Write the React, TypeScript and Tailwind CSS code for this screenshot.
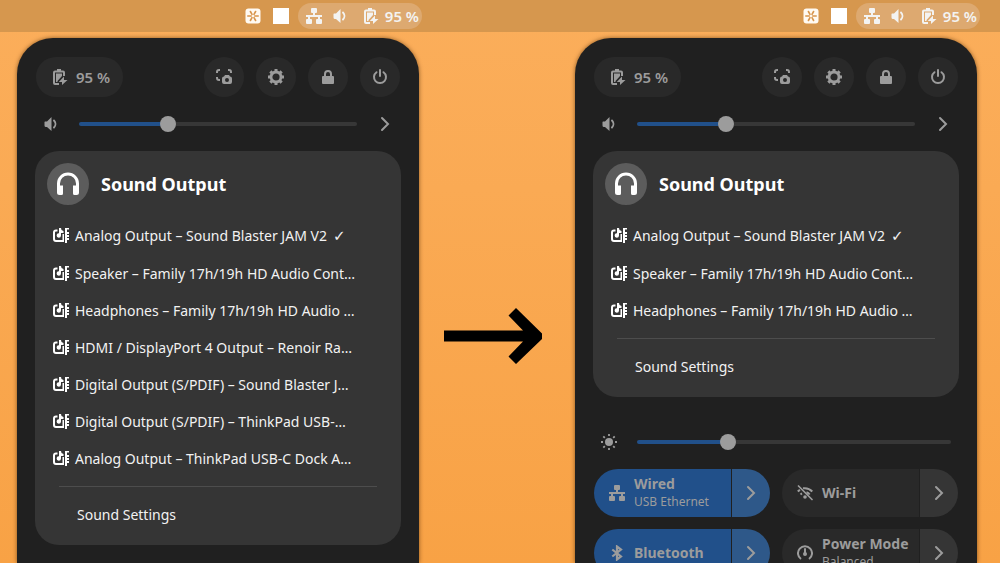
import React, { useState } from "react";

type IconProps = { className?: string };

function BatteryIcon({ className }: IconProps) {
  return (
    <svg viewBox="0 0 16 16" className={className} fill="currentColor" aria-hidden="true">
      <path d="M5 0h4v2H5z" />
      <path d="M3 1.500h8a2 2 0 0 1 2 2V7h-2V3.500H3V14h4v2H3a2 2 0 0 1-2-2V3.500a2 2 0 0 1 2-2z" />
      <path d="M4 4.500h6V7l-4.500 5V13H4z" />
      <path d="M12 7.500V11h3.500L10 16v-3H6.800z" />
    </svg>
  );
}

function SpeakerIcon({ className }: IconProps) {
  return (
    <svg viewBox="0 0 16 16" className={className} aria-hidden="true">
      <path fill="currentColor" d="M2 5.500h2L8.500 1v14L4 11H3a1.500 1.500 0 0 1-1.500-1.500V6z" />
      <path fill="none" stroke="currentColor" strokeWidth="1.900" strokeLinecap="round" d="M11 4.500a5 5 0 0 1 0 7" />
    </svg>
  );
}

function NetworkIcon({ className }: IconProps) {
  return (
    <svg viewBox="0 0 16 16" className={className} fill="currentColor" aria-hidden="true">
      <rect x="5" y="0" width="6" height="5" rx="1" />
      <path d="M7 4h2v3h7v2h-2v3h-2V9H4v3H2V9H0V7h7z" />
      <rect x="0" y="11" width="6" height="5" rx="1" />
      <rect x="10" y="11" width="6" height="5" rx="1" />
    </svg>
  );
}

function AsteriskIcon({ className }: IconProps) {
  return (
    <svg viewBox="0 0 16 16" className={className} aria-hidden="true">
      <rect x="0.500" y="0.500" width="15" height="15" rx="3" fill="#fffaf2" />
      <g stroke="#d8954c" strokeWidth="1.600" strokeLinecap="round">
        <path d="M2.800 8h3.400M9.800 8h3.400M5.400 3.500l1.600 2.900M10.600 3.500L9 6.400M5.400 12.500l1.600-2.900M10.600 12.500L9 9.600" />
      </g>
    </svg>
  );
}

function ScreenshotIcon({ className }: IconProps) {
  return (
    <svg viewBox="0 0 16 16" className={className} aria-hidden="true">
      <path fill="none" stroke="currentColor" strokeWidth="2" d="M1 4V3a2 2 0 0 1 2-2h1M12 1h1a2 2 0 0 1 2 2v1M1 8v1a2 2 0 0 0 2 2h1" />
      <path fill="currentColor" fillRule="evenodd" d="M8 7.500L9 6h4l1 1.500a2 2 0 0 1 2 2V13a2 2 0 0 1-2 2H8a2 2 0 0 1-2-2V9.500a2 2 0 0 1 2-2zM11 9a2 2 0 1 0 0 4 2 2 0 0 0 0-4z" />
    </svg>
  );
}

function GearIcon({ className }: IconProps) {
  return (
    <svg viewBox="0 0 16 16" className={className} aria-hidden="true">
      <circle cx="8" cy="8" r="5" fill="none" stroke="currentColor" strokeWidth="2.800" />
      <g stroke="currentColor" strokeWidth="3">
        <path d="M8 0v3M8 13v3M0 8h3M13 8h3M2.340 2.340l2 2M11.660 11.660l2 2M2.340 13.660l2-2M11.660 4.340l2-2" />
      </g>
    </svg>
  );
}

function LockIcon({ className }: IconProps) {
  return (
    <svg viewBox="0 0 16 16" className={className} aria-hidden="true">
      <path fill="none" stroke="currentColor" strokeWidth="2" d="M5 8V5a3 3 0 0 1 6 0v3" />
      <path fill="currentColor" d="M3 7h10a1 1 0 0 1 1 1v6a1 1 0 0 1-1 1H3a1 1 0 0 1-1-1V8a1 1 0 0 1 1-1z" />
    </svg>
  );
}

function PowerIcon({ className }: IconProps) {
  return (
    <svg viewBox="0 0 16 16" className={className} fill="none" stroke="currentColor" strokeWidth="2" strokeLinecap="round" aria-hidden="true">
      <path d="M8 1v6M4.500 3.200A6 6 0 1 0 11.500 3.200" />
    </svg>
  );
}

function ChevronIcon({ className }: IconProps) {
  return (
    <svg viewBox="0 0 16 16" className={className} fill="none" stroke="currentColor" strokeWidth="2" strokeLinecap="round" aria-hidden="true">
      <path d="M5 2l6 6-6 6" />
    </svg>
  );
}

function HeadphonesIcon({ className }: IconProps) {
  return (
    <svg viewBox="0 0 24 24" className={className} aria-hidden="true">
      <path fill="none" stroke="currentColor" strokeWidth="3" d="M2.500 17v-5.500a9.500 9.500 0 0 1 19 0V17" />
      <path fill="currentColor" d="M1 13.500h6v8A1.500 1.500 0 0 1 5.500 23h-2A2.500 2.500 0 0 1 1 20.500zM17 13.500h6v7a2.500 2.500 0 0 1-2.500 2.500h-2a1.500 1.500 0 0 1-1.500-1.500z" />
    </svg>
  );
}

function AudioCardIcon({ className }: IconProps) {
  return (
    <svg viewBox="0 0 16 16" className={className} fill="currentColor" aria-hidden="true">
      <path d="M4.500 1.500v2H3a1 1 0 0 0-1 1V11a1 1 0 0 0 1 1h8v2H3a3 3 0 0 1-3-3V4.500a3 3 0 0 1 3-3z" />
      <path d="M9.500 6H11v7H9.500z" />
      <path d="M6 0h2l0.500 2 2 1v2H8v2.500a2.200 2.200 0 1 1-2-2.200z" />
      <path d="M12 0h4v1.500h-2V4h2v2h-2v1h2v2h-2v1h2v2h-2v3h-2z" />
    </svg>
  );
}

function SunIcon({ className }: IconProps) {
  return (
    <svg viewBox="0 0 16 16" className={className} aria-hidden="true">
      <circle cx="8" cy="8" r="4" fill="currentColor" />
      <path stroke="currentColor" strokeWidth="1.800" d="M8 0v2M8 14v2M0 8h2M14 8h2M2.300 2.300l1.500 1.500M12.200 12.200l1.500 1.500M2.300 13.700l1.500-1.500M12.200 3.800l1.500-1.500" />
    </svg>
  );
}

function BluetoothIcon({ className }: IconProps) {
  return (
    <svg viewBox="0 0 16 16" className={className} fill="none" stroke="currentColor" strokeWidth="2.200" aria-hidden="true">
      <path d="M3.300 4.500l8.700 7L8 14.500v-13l4 3-8.700 7" />
    </svg>
  );
}

function WifiOffIcon({ className }: IconProps) {
  return (
    <svg viewBox="0 0 16 16" className={className} fill="none" stroke="currentColor" aria-hidden="true">
      <path strokeWidth="2" d="M0.800 6.500A11 11 0 0 1 3 4.900M6 3.300a10.500 10.500 0 0 1 9.300 3.200M3.500 9.500A7 7 0 0 1 5 8.300M9.500 7.300a6.500 6.500 0 0 1 3.200 2.200" />
      <circle cx="8" cy="12" r="1.800" fill="currentColor" stroke="none" />
      <path strokeWidth="1.700" strokeLinecap="round" d="M1.500 1l13.500 13.500" />
    </svg>
  );
}

function GaugeIcon({ className }: IconProps) {
  return (
    <svg viewBox="0 0 16 16" className={className} fill="none" stroke="currentColor" aria-hidden="true">
      <path strokeWidth="2" d="M4 14A7 7 0 1 1 12 14" />
      <path strokeWidth="2" strokeLinecap="round" d="M8 4v5" />
      <circle cx="8" cy="9" r="2" fill="currentColor" stroke="none" />
    </svg>
  );
}

function LongArrow({ className }: IconProps) {
  return (
    <svg viewBox="0 0 98 58" className={className} aria-hidden="true">
      <path fill="#000" d="M0 23.500H79L64.500 8.500 72 1 98 26.500V32L72 57 64.500 49.500 79 34.500H0z" />
    </svg>
  );
}

function StatusCluster() {
  return (
    <div className="flex min-w-0 flex-1 items-center justify-end gap-3">
      <AsteriskIcon className="size-4" />
      <span className="size-4 bg-white" />
      <button type="button" aria-label="System menu" className="-ml-[3px] flex h-[26px] items-center rounded-full bg-[#dda970] pr-[3px] pl-2 text-[#f3f3f2]">
        <NetworkIcon className="size-4" />
        <SpeakerIcon className="ml-2.5 size-4" />
        <BatteryIcon className="ml-[15px] size-4" />
        <span className="ml-1.5 text-[15px] leading-5 font-semibold">95 %</span>
      </button>
    </div>
  );
}

function RoundButton({ label, children }: { label: string; children: React.ReactNode }) {
  return (
    <button type="button" aria-label={label} className="flex size-10 items-center justify-center rounded-full bg-[#292929]">
      {children}
    </button>
  );
}

function Slider({ label, initial }: { label: string; initial: number }) {
  const [value, setValue] = useState(initial);
  return (
    <div className="flex h-4 min-w-0 flex-1 items-center">
      <input
        type="range"
        aria-label={label}
        min={0}
        max={100}
        value={value}
        onChange={(e) => setValue(Number(e.target.value))}
        style={{ backgroundImage: `linear-gradient(to right, #21508a ${value}%, #373737 ${value}%)` }}
        className="h-1 w-full appearance-none rounded-full [&::-webkit-slider-thumb]:size-4 [&::-webkit-slider-thumb]:appearance-none [&::-webkit-slider-thumb]:rounded-full [&::-webkit-slider-thumb]:bg-[#9c9c9c]"
      />
    </div>
  );
}

function SoundCard({ devices }: { devices: string[] }) {
  return (
    <section className="rounded-[24px] bg-[#353535] p-3 text-white">
      <header className="flex items-center gap-3">
        <span className="flex size-[42px] items-center justify-center rounded-full bg-[#5c5c5c]">
          <HeadphonesIcon className="size-6" />
        </span>
        <h2 className="text-[18px] leading-6 font-bold">Sound Output</h2>
      </header>
      <ul className="mt-3 pl-1.5">
        {devices.map((device, i) => (
          <li key={device} className="first:mb-px">
            <button type="button" className="flex h-[37px] w-full items-center text-left text-[14px] leading-5 whitespace-nowrap text-[#f2f2f2]">
              <AudioCardIcon className="mr-1.5 size-4 shrink-0 text-white" />
              <span>{device}</span>
              {i === 0 && <span className="ml-1.5 font-['DejaVu_Sans'] text-[15px] font-bold">✓</span>}
            </button>
          </li>
        ))}
      </ul>
      <hr className="mx-3 mt-[9px] border-[#4d4d4d]" />
      <button type="button" className="mt-2.5 ml-[30px] block h-9 text-[14px] leading-5 text-[#f2f2f2]">
        Sound Settings
      </button>
    </section>
  );
}

type TileProps = { icon: React.ReactNode; title: string; subtitle?: string; active?: boolean };

function Tile({ icon, title, subtitle, active = false }: TileProps) {
  return (
    <div className="flex h-12 min-w-0 gap-px overflow-hidden rounded-full">
      <button type="button" className={`flex min-w-0 flex-1 items-center gap-[9px] pl-[15px] text-left ${active ? "bg-[#21508a]" : "bg-[#292929]"}`}>
        {icon}
        <span className="flex min-w-0 flex-col whitespace-nowrap">
          <span className="text-[14px] leading-[18px] font-bold">{title}</span>
          {subtitle && <span className="text-[12px] leading-[18px]">{subtitle}</span>}
        </span>
      </button>
      <button type="button" aria-label={`${title} options`} className={`flex w-[38px] items-center justify-center ${active ? "bg-[#2e5889]" : "bg-[#353535]"}`}>
        <ChevronIcon className="size-4" />
      </button>
    </div>
  );
}

function QuickSettings({ devices, children }: { devices: string[]; children?: React.ReactNode }) {
  return (
    <section className="min-w-0 flex-1 rounded-t-[36px] bg-[#202020] px-[18px] pt-[19px] text-[#9c9c9c] shadow-[0_0_4px_rgba(60,30,0,0.6)]">
      <div className="flex gap-3 px-px">
        <button type="button" className="mr-auto flex h-10 items-center gap-2 rounded-full bg-[#292929] pr-[13px] pl-4 text-[15px] leading-5 font-semibold">
          <BatteryIcon className="size-4" />
          95 %
        </button>
        <RoundButton label="Take screenshot">
          <ScreenshotIcon className="size-4" />
        </RoundButton>
        <RoundButton label="Settings">
          <GearIcon className="size-4" />
        </RoundButton>
        <RoundButton label="Lock screen">
          <LockIcon className="size-4" />
        </RoundButton>
        <RoundButton label="Power off">
          <PowerIcon className="size-4" />
        </RoundButton>
      </div>
      <div className="mt-[19px] flex h-4 items-center px-2">
        <SpeakerIcon className="mr-5 size-4" />
        <Slider label="Volume" initial={31} />
        <button type="button" aria-label="Choose sound output" className="ml-5">
          <ChevronIcon className="size-4" />
        </button>
      </div>
      <div className="mt-[19px]">
        <SoundCard devices={devices} />
      </div>
      {children}
    </section>
  );
}

const available = [
  "Analog Output – Sound Blaster JAM V2",
  "Speaker – Family 17h/19h HD Audio Cont…",
  "Headphones – Family 17h/19h HD Audio …",
];

const everyDevice = [
  ...available,
  "HDMI / DisplayPort 4 Output – Renoir Ra…",
  "Digital Output (S/PDIF) – Sound Blaster J…",
  "Digital Output (S/PDIF) – ThinkPad USB-…",
  "Analog Output – ThinkPad USB-C Dock A…",
];

export default function App() {
  return (
    <div className="flex h-screen flex-col overflow-hidden bg-linear-to-b from-[#fbae5b] to-[#f8a245] font-['Noto_Sans',sans-serif]">
      <header className="flex h-8 shrink-0 gap-[136px] bg-[#d6974e] pr-5">
        <StatusCluster />
        <StatusCluster />
      </header>
      <main className="flex min-h-0 flex-1 pt-1.5 pr-[23px] pl-[17px]">
        <QuickSettings devices={everyDevice} />
        <div className="w-[156px] shrink-0 pt-[269px] pl-[25px]">
          <LongArrow className="h-[58px] w-[98px]" />
        </div>
        <QuickSettings devices={available}>
          <div className="mt-[37px] flex h-4 items-center px-2">
            <SunIcon className="mr-5 size-4" />
            <Slider label="Brightness" initial={28} />
          </div>
          <div className="mt-[19px] grid grid-cols-2 gap-3 px-px">
            <Tile active icon={<NetworkIcon className="size-4 shrink-0" />} title="Wired" subtitle="USB Ethernet" />
            <Tile icon={<WifiOffIcon className="size-4 shrink-0" />} title="Wi-Fi" />
            <Tile active icon={<BluetoothIcon className="size-4 shrink-0" />} title="Bluetooth" />
            <Tile icon={<GaugeIcon className="size-4 shrink-0" />} title="Power Mode" subtitle="Balanced" />
          </div>
        </QuickSettings>
      </main>
    </div>
  );
}
